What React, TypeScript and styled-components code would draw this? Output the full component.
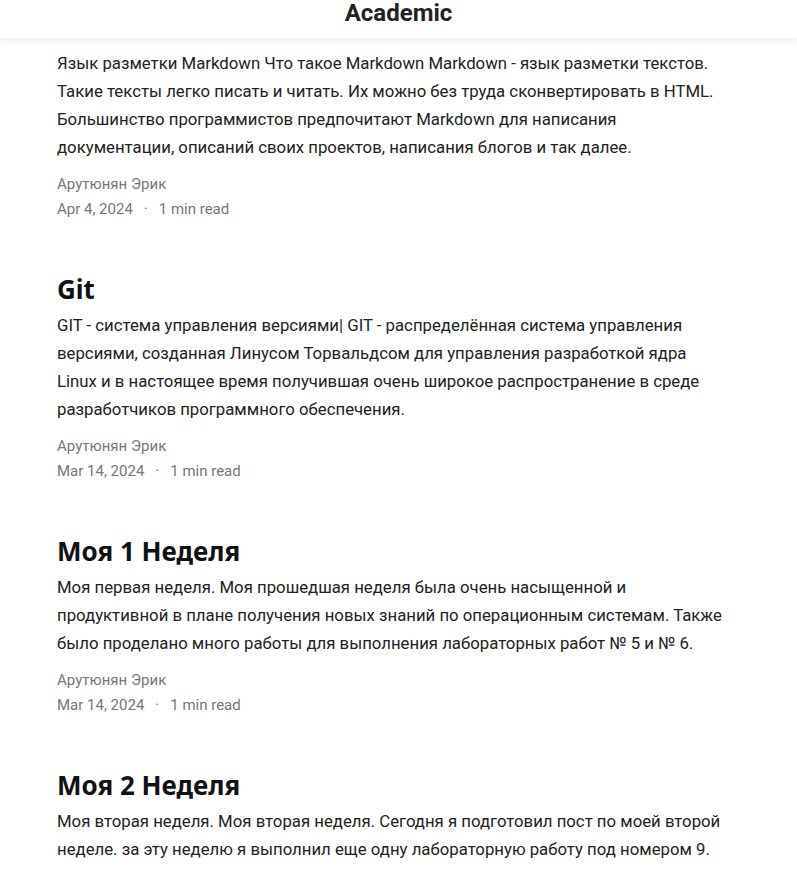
import React from "react";
import styled, { createGlobalStyle } from "styled-components";

const Global = createGlobalStyle`
  html, body { margin: 0; padding: 0; background: #fff; }
  body { font-family: Roboto, "Liberation Sans", sans-serif; color: #222; }
`;

const Header = styled.header`
  height: 38px;
  display: flex;
  align-items: center;
  justify-content: center;
  background: #fff;
  box-shadow: 0 2px 8px rgba(0, 0, 0, 0.09);
  position: relative;
  z-index: 1;
`;

const Brand = styled.div`
  font-family: Roboto, sans-serif;
  font-weight: 700;
  font-size: 24px;
  color: #222;
  margin-top: -12px;
`;

const Feed = styled.main`
  display: flex;
  flex-direction: column;
  padding: 11px 69px 0 57px;
  gap: 48px;
`;

const Article = styled.article`
  display: flex;
  flex-direction: column;
`;

const Title = styled.h3`
  font-family: "Noto Sans", sans-serif;
  font-weight: 700;
  font-size: 26px;
  line-height: 36px;
  color: #111;
  margin: 1px 0 4px 0;
`;

const Summary = styled.p`
  margin: 0;
  font-size: 16.75px;
  line-height: 28px;
  color: #222;
`;

const Meta = styled.div`
  margin-top: 11px;
  font-size: 15px;
  line-height: 25px;
  color: #777;
`;

const Dot = styled.span`
  margin: 0 11px;
`;

type Post = { title?: string; summary: string; date: string };

const posts: Post[] = [
  {
    summary:
      "Язык разметки Markdown Что такое Markdown Markdown - язык разметки текстов. Такие тексты легко писать и читать. Их можно без труда сконвертировать в HTML. Большинство программистов предпочитают Markdown для написания документации, описаний своих проектов, написания блогов и так далее.",
    date: "Apr 4, 2024",
  },
  {
    title: "Git",
    summary:
      "GIT - система управления версиями| GIT - распределённая система управления версиями, созданная Линусом Торвальдсом для управления разработкой ядра Linux и в настоящее время получившая очень широкое распространение в среде разработчиков программного обеспечения.",
    date: "Mar 14, 2024",
  },
  {
    title: "Моя 1 Неделя",
    summary:
      "Моя первая неделя. Моя прошедшая неделя была очень насыщенной и продуктивной в плане получения новых знаний по операционным системам. Также было проделано много работы для выполнения лабораторных работ № 5 и № 6.",
    date: "Mar 14, 2024",
  },
  {
    title: "Моя 2 Неделя",
    summary:
      "Моя вторая неделя. Моя вторая неделя. Сегодня я подготовил пост по моей второй неделе. за эту неделю я выполнил еще одну лабораторную работу под номером 9.",
    date: "Mar 14, 2024",
  },
];

export default function App() {
  return (
    <>
      <Global />
      <Header>
        <Brand>Academic</Brand>
      </Header>
      <Feed>
        {posts.map((p, i) => (
          <Article key={i}>
            {p.title && <Title>{p.title}</Title>}
            <Summary>{p.summary}</Summary>
            <Meta>
              <div>Арутюнян Эрик</div>
              <div>
                {p.date}
                <Dot>·</Dot>1 min read
              </div>
            </Meta>
          </Article>
        ))}
      </Feed>
    </>
  );
}
